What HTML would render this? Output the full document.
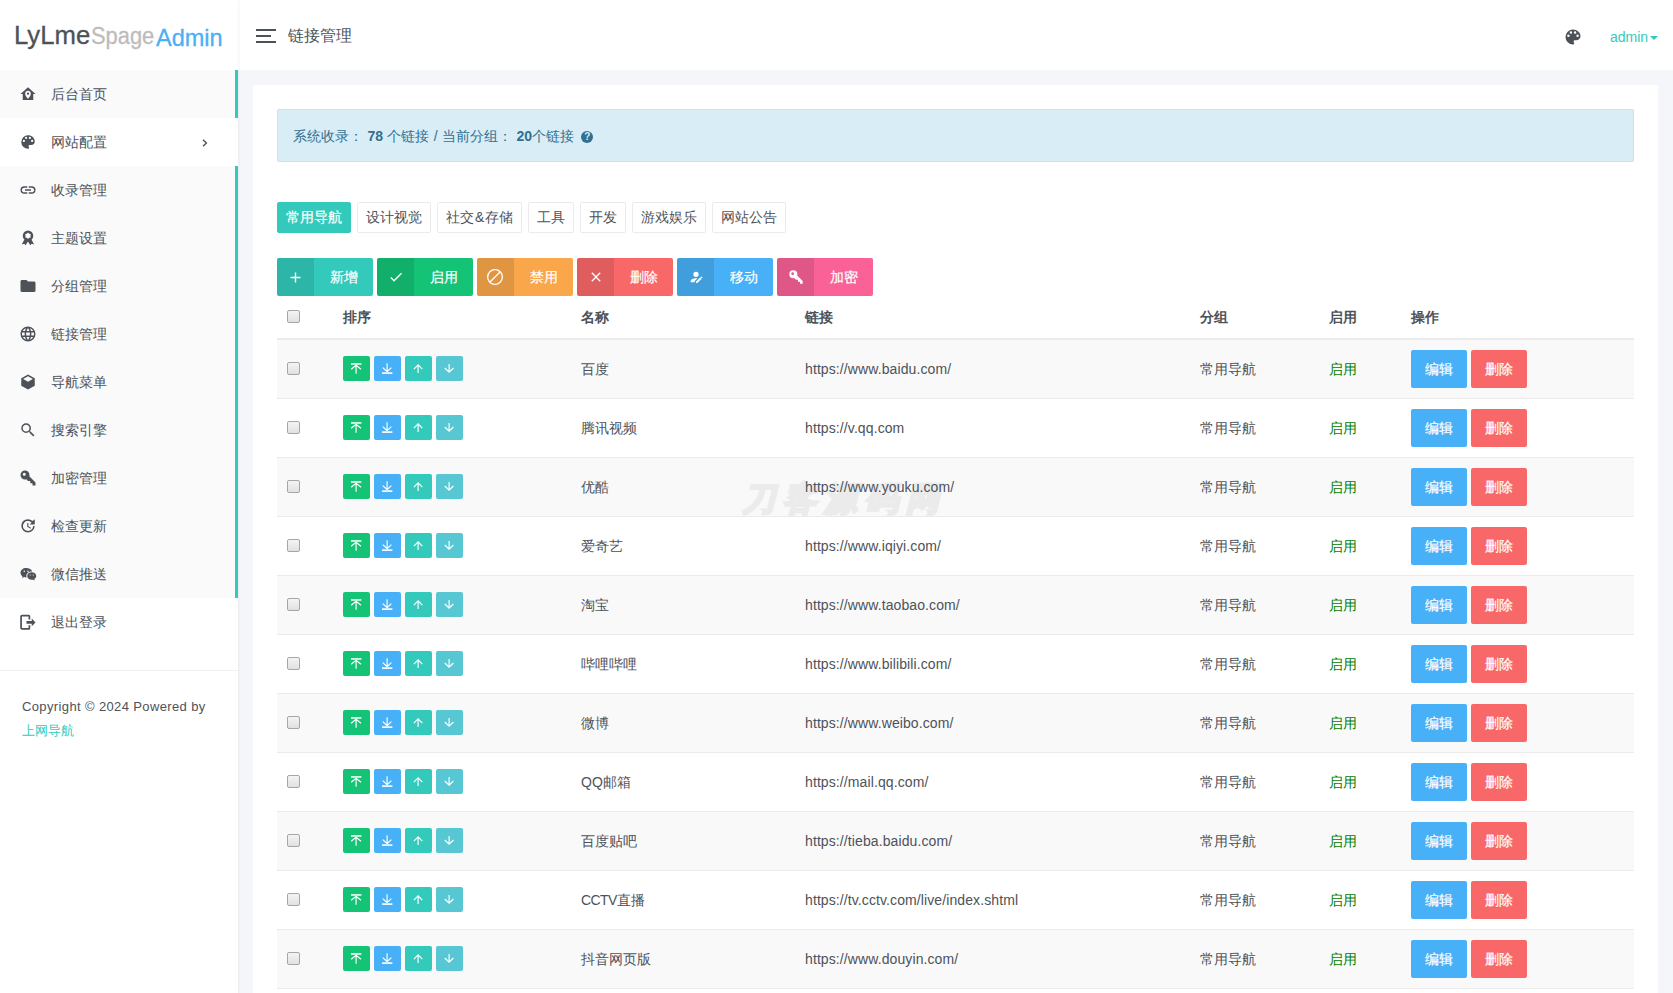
<!DOCTYPE html>
<html><head><meta charset="utf-8"><style>
*{margin:0;padding:0;box-sizing:border-box}
html,body{width:1673px;height:993px;overflow:hidden;background:#f5f6fa;font-family:"Liberation Sans",sans-serif;color:#4d5259;font-size:14px}
.sidebar{position:absolute;z-index:5;left:0;top:0;width:238px;height:993px;background:#fff;box-shadow:1px 0 2px rgba(0,0,0,.05)}
.lg{position:absolute;line-height:30px;transform-origin:0 0;white-space:nowrap;-webkit-text-stroke:0.3px currentColor}
.logo{position:absolute;left:0;top:0;width:238px;height:70px}
.header{position:absolute;left:238px;top:0;right:0;height:70px;background:#fff}
.mi{position:absolute;left:0;width:238px;height:48px;background:#fff}
.mi.act{background:#fafafa}
.mi .ico{position:absolute;left:19px;top:15px;width:18px;height:18px}
.mi .ico svg{display:block}
.mi .mt{position:absolute;left:51px;top:14px;line-height:20px;font-size:14px;color:#4d5259}
.mi .arr{position:absolute;left:202px;top:21px}
.bar{position:absolute;left:235px;width:3px;background:#33cabb}
.divider{position:absolute;left:0;top:670px;width:238px;height:1px;background:#f0f0f0}
.copy{position:absolute;left:22px;top:695px;line-height:24px;font-size:13px;letter-spacing:0.37px;color:#4d5259}
.copy a{letter-spacing:0}
.copy a{color:#33cabb;text-decoration:none}
.card{position:absolute;left:253px;top:85px;width:1405px;height:920px;background:#fff}
.alert{position:absolute;left:24px;top:24px;width:1357px;height:53px;background:#d9edf7;border:1px solid #bce8f1;border-radius:2px;color:#31708f;padding:0 15px;line-height:52px;font-size:14px;word-spacing:0.5px}
.tabs{position:absolute;left:24px;top:117px;height:31px;white-space:nowrap}
.tab{display:inline-block;vertical-align:top;height:31px;line-height:29px;padding:0 8px;border:1px solid #ebebeb;border-radius:2px;margin-right:6px;font-size:14px;color:#4d5259;background:#fff}
.tab.on{background:#33cabb;border-color:#33cabb;color:#fff;-webkit-text-stroke:0.2px #fff}
.tools{position:absolute;left:24px;top:173px;height:38px;white-space:nowrap}
.tb{position:relative;display:inline-block;vertical-align:top;width:96px;height:38px;margin-right:4px;border-radius:2px;color:#fff;font-size:14px;line-height:38px;overflow:hidden}
.tb .lb{position:absolute;left:0;top:0;width:37px;height:38px;background:rgba(0,0,0,.1)}
.tb .lb svg{position:absolute;left:11px;top:11px}
.tb .tx{position:absolute;left:52.5px;top:0;-webkit-text-stroke:0.2px #fff}
.table{position:absolute;left:24px;top:211px;width:1357px;height:800px}
.th{position:absolute;top:0;left:0;width:1357px;height:44px;border-bottom:2px solid #ebebeb}
.th span{position:absolute;top:11px;line-height:20px;font-weight:bold;font-size:14px;color:#4d5259}
.cb{position:absolute;top:21.5px;width:13px;height:13px;border:1px solid #a6a6a6;border-radius:2px;background:linear-gradient(#f4f4f4,#e1e1e1)}
.th .cb{top:14px}
.tr{position:absolute;left:0;width:1357px;height:59px;border-bottom:1px solid #ebebeb;background:#fff}
.tr.odd{background:#f9f9f9}
.tr .td{position:absolute;top:19px;line-height:20px;color:#4d5259}
.tr .url{letter-spacing:0.1px}
.tr .green{color:#008000}
.sbs{position:absolute;left:66px;top:16px;height:25px;white-space:nowrap}
.sb{display:inline-block;vertical-align:top;width:27px;height:25px;border-radius:2px;margin-right:4px;position:relative}
.sb svg{position:absolute;left:0;top:0}
.s-succ{background:#15c377}.s-info{background:#48b0f7}.s-prim{background:#33cabb}.s-cyan{background:#57c7d4}
.ob{position:absolute;top:10px;width:56px;height:38px;border-radius:2px;color:#fff;text-align:center;line-height:38px;-webkit-text-stroke:0.2px #fff}
.b-edit{background:#48b0f7}.b-del{background:#f96868}
.wm{position:absolute;z-index:1;left:742px;top:481px;font-size:33px;line-height:36px;font-weight:bold;font-style:italic;color:#ebebeb;-webkit-text-stroke:2.6px #ebebeb;letter-spacing:8px;white-space:nowrap}
.tr .td,.tr .sbs,.tr .ob,.tr .cb{z-index:2}
</style></head><body>
<div class="sidebar">
 <div class="logo">
  <span class="lg" style="left:14px;top:19.5px;font-size:26.5px;color:#4d5259;transform:scaleX(0.97)">LyLme</span>
  <span class="lg" style="left:91px;top:21px;font-size:23.5px;color:#bcbcbc;transform:scaleX(0.93)">Spage</span>
  <span class="lg" style="left:155.5px;top:22.5px;font-size:24.5px;color:#48b0f7;transform:scaleX(0.96)">Admin</span>
 </div>
<div class="mi act" style="top:70px"><span class="ico"><svg width="18" height="18" viewBox="0 0 24 24" fill="#4d5259" ><path fill-rule="evenodd" d="M12,3L2,12H5V20H19V12H22L12,3M12,7.7C14.1,7.7 15.8,9.4 15.8,11.5C15.8,14.5 12,18.3 12,18.3C12,18.3 8.2,14.5 8.2,11.5C8.2,9.4 9.9,7.7 12,7.7M12,10A1.5,1.5 0 0,0 10.5,11.5A1.5,1.5 0 0,0 12,13A1.5,1.5 0 0,0 13.5,11.5A1.5,1.5 0 0,0 12,10Z"/></svg></span><span class="mt">后台首页</span></div>
<div class="mi" style="top:118px"><span class="ico"><svg width="18" height="18" viewBox="0 0 24 24" fill="#4d5259" ><path d="M17.5,12A1.5,1.5 0 0,1 16,10.5A1.5,1.5 0 0,1 17.5,9A1.5,1.5 0 0,1 19,10.5A1.5,1.5 0 0,1 17.5,12M14.5,8A1.5,1.5 0 0,1 13,6.5A1.5,1.5 0 0,1 14.5,5A1.5,1.5 0 0,1 16,6.5A1.5,1.5 0 0,1 14.5,8M9.5,8A1.5,1.5 0 0,1 8,6.5A1.5,1.5 0 0,1 9.5,5A1.5,1.5 0 0,1 11,6.5A1.5,1.5 0 0,1 9.5,8M6.5,12A1.5,1.5 0 0,1 5,10.5A1.5,1.5 0 0,1 6.5,9A1.5,1.5 0 0,1 8,10.5A1.5,1.5 0 0,1 6.5,12M12,3A9,9 0 0,0 3,12A9,9 0 0,0 12,21A1.5,1.5 0 0,0 13.5,19.5C13.5,19.11 13.35,18.76 13.11,18.5C12.88,18.23 12.73,17.88 12.73,17.5A1.5,1.5 0 0,1 14.23,16H16A5,5 0 0,0 21,11C21,6.58 16.97,3 12,3Z"/></svg></span><span class="mt">网站配置</span><svg class="arr" width="6" height="8" viewBox="0 0 6 8"><path d="M1 0.8L4.4 4 1 7.2" fill="none" stroke="#4d5259" stroke-width="1.4"/></svg></div>
<div class="mi act" style="top:166px"><span class="ico"><svg width="18" height="18" viewBox="0 0 24 24" fill="#4d5259" ><path d="M3.9,12C3.9,10.29 5.29,8.9 7,8.9H11V7H7A5,5 0 0,0 2,12A5,5 0 0,0 7,17H11V15.1H7C5.29,15.1 3.9,13.71 3.9,12M8,13H16V11H8V13M17,7H13V8.9H17C18.71,8.9 20.1,10.29 20.1,12C20.1,13.71 18.71,15.1 17,15.1H13V17H17A5,5 0 0,0 22,12A5,5 0 0,0 17,7Z"/></svg></span><span class="mt">收录管理</span></div>
<div class="mi act" style="top:214px"><span class="ico"><svg width="18" height="18" viewBox="0 0 24 24" fill="#4d5259" ><path fill-rule="evenodd" d="M12 2a7 7 0 1 1 0 14a7 7 0 1 1 0-14zM12.00 4.60 L13.60 6.23 L15.81 6.80 L15.20 9.00 L15.81 11.20 L13.60 11.77 L12.00 13.40 L10.40 11.77 L8.19 11.20 L8.80 9.00 L8.19 6.80 L10.40 6.23Z"/><path d="M7.2 14L3.6 20.6 6.9 19.7 8.8 21.8 11.9 16.6 15 21.8 16.9 19.7 20.2 20.6 16.6 14z"/></svg></span><span class="mt">主题设置</span></div>
<div class="mi act" style="top:262px"><span class="ico"><svg width="18" height="18" viewBox="0 0 24 24" fill="#4d5259" ><path d="M10,4H4C2.89,4 2,4.89 2,6V18A2,2 0 0,0 4,20H20A2,2 0 0,0 22,18V8C22,6.89 21.1,6 20,6H12L10,4Z"/></svg></span><span class="mt">分组管理</span></div>
<div class="mi act" style="top:310px"><span class="ico"><svg width="18" height="18" viewBox="0 0 24 24" fill="#4d5259" ><path d="M16.36,14C16.44,13.34 16.5,12.68 16.5,12C16.5,11.32 16.44,10.66 16.36,10H19.74C19.9,10.64 20,11.31 20,12C20,12.69 19.9,13.36 19.74,14M14.59,19.56C15.19,18.45 15.65,17.25 15.97,16H18.92C17.96,17.65 16.43,18.93 14.59,19.56M14.34,14H9.66C9.56,13.34 9.5,12.68 9.5,12C9.5,11.32 9.56,10.65 9.66,10H14.34C14.43,10.65 14.5,11.32 14.5,12C14.5,12.68 14.43,13.34 14.34,14M12,19.96C11.17,18.76 10.5,17.43 10.09,16H13.910C13.5,17.43 12.83,18.76 12,19.96M8,8H5.08C6.03,6.34 7.570,5.06 9.4,4.44C8.8,5.55 8.35,6.75 8,8M5.08,16H8C8.35,17.25 8.8,18.45 9.4,19.56C7.57,18.93 6.03,17.65 5.08,16M4.26,14C4.1,13.36 4,12.69 4,12C4,11.31 4.1,10.64 4.26,10H7.64C7.56,10.66 7.5,11.32 7.5,12C7.5,12.68 7.56,13.34 7.64,14M12,4.03C12.83,5.23 13.5,6.57 13.91,8H10.09C10.5,6.57 11.17,5.23 12,4.03M18.92,8H15.97C15.65,6.75 15.19,5.55 14.59,4.44C16.43,5.07 17.96,6.34 18.92,8M12,2C6.47,2 2,6.5 2,12A10,10 0 0,0 12,22A10,10 0 0,0 22,12A10,10 0 0,0 12,2Z"/></svg></span><span class="mt">链接管理</span></div>
<div class="mi act" style="top:358px"><span class="ico"><svg width="18" height="18" viewBox="0 0 24 24" fill="#4d5259" ><path d="M12 2l9 5v10l-9 5-9-5V7z M12 4.3L5.5 7.9 12 11.5l6.5-3.6z" fill-rule="evenodd"/></svg></span><span class="mt">导航菜单</span></div>
<div class="mi act" style="top:406px"><span class="ico"><svg width="18" height="18" viewBox="0 0 24 24" fill="#4d5259" ><path d="M9.5,3A6.5,6.5 0 0,1 16,9.5C16,11.11 15.41,12.59 14.44,13.73L14.71,14H15.5L20.5,19L19,20.5L14,15.5V14.71L13.73,14.44C12.59,15.41 11.11,16 9.5,16A6.5,6.5 0 0,1 3,9.5A6.5,6.5 0 0,1 9.5,3M9.5,5C7,5 5,7 5,9.5C5,12 7,14 9.5,14C12,14 14,12 14,9.5C14,7 12,5 9.5,5Z"/></svg></span><span class="mt">搜索引擎</span></div>
<div class="mi act" style="top:454px"><span class="ico"><svg width="18" height="18" viewBox="0 0 24 24" fill="#4d5259" ><path d="M22,18V22H18V19H15V16H12L9.74,13.74C9.19,13.91 8.61,14 8,14A6,6 0 0,1 2,8A6,6 0 0,1 8,2A6,6 0 0,1 14,8C14,8.61 13.91,9.19 13.74,9.74L22,18M7,5A2,2 0 0,0 5,7A2,2 0 0,0 7,9A2,2 0 0,0 9,7A2,2 0 0,0 7,5Z"/></svg></span><span class="mt">加密管理</span></div>
<div class="mi act" style="top:502px"><span class="ico"><svg width="18" height="18" viewBox="0 0 24 24" fill="#4d5259" ><path d="M21 10.1h-6.8l2.7-2.8C14.2 4.6 9.9 4.5 7.2 7.2a6.8 6.8 0 0 0 0 9.6 6.8 6.8 0 0 0 9.6 0c1.3-1.3 2-2.9 2-4.8h2c0 2.4-1 4.4-2.6 6.1a9 9 0 0 1-12.6 0 9 9 0 0 1 0-12.6 8.9 8.9 0 0 1 12.5 0L21 3zM12.5 8v4.2l3.5 2.1-.7 1.2-4.3-2.5V8z"/></svg></span><span class="mt">检查更新</span></div>
<div class="mi act" style="top:550px"><span class="ico"><svg width="18" height="18" viewBox="0 0 24 24" fill="#4d5259" ><path d="M9.5 4C5.4 4 2 6.8 2 10.3c0 2 1.1 3.7 2.8 4.9L4.1 17.5l2.6-1.4c.9.3 1.8.4 2.8.4h.6a5.6 5.6 0 0 1-.3-1.8c0-3.4 3.2-6.1 7.2-6.1h.6C16.9 5.9 13.5 4 9.5 4zM7 7.3a1 1 0 1 1 0 2 1 1 0 0 1 0-2zm5 0a1 1 0 1 1 0 2 1 1 0 0 1 0-2zM17 9.8c-3.3 0-6 2.2-6 5s2.7 5 6 5c.7 0 1.4-.1 2-.3l2.1 1.1-.6-1.9c1.5-.9 2.5-2.3 2.5-3.9 0-2.8-2.7-5-6-5zm-2 2.7a.8.8 0 1 1 0 1.6.8.8 0 0 1 0-1.6zm4 0a.8.8 0 1 1 0 1.6.8.8 0 0 1 0-1.6z"/></svg></span><span class="mt">微信推送</span></div>
<div class="mi" style="top:598px"><span class="ico"><svg width="18" height="18" viewBox="0 0 24 24" fill="#4d5259" ><path d="M4 2.4h9a2 2 0 0 1 2 2V8.6h-2.3V4.7H3.9v15.3h8.8v-3.7H15v4a2 2 0 0 1-2 2H4a2.4 2.4 0 0 1-2.4-2.4V4.8A2.4 2.4 0 0 1 4 2.4zM10 10.6h7V7.2l5 5.3-5 5.3v-3.4H10z"/></svg></span><span class="mt">退出登录</span></div>

 <div class="bar" style="top:70px;height:48px"></div>
 <div class="bar" style="top:166px;height:432px"></div>
 <div class="divider"></div>
 <div class="copy">Copyright © 2024 Powered by<br><a>上网导航</a></div>
</div>
<div class="header">
 <svg style="position:absolute;left:18px;top:29px" width="20" height="14" viewBox="0 0 20 14"><rect x="0" y="0" width="20" height="2" fill="#4d5259"/><rect x="0" y="6" width="15" height="2" fill="#4d5259"/><rect x="0" y="12" width="20" height="2" fill="#4d5259"/></svg>
 <span style="position:absolute;left:50px;top:25px;font-size:16px;line-height:22px;color:#4d5259">链接管理</span>
 <svg width="20" height="20" viewBox="0 0 24 24" fill="#4d5259" style="position:absolute;left:1325px;top:27px"><path d="M17.5,12A1.5,1.5 0 0,1 16,10.5A1.5,1.5 0 0,1 17.5,9A1.5,1.5 0 0,1 19,10.5A1.5,1.5 0 0,1 17.5,12M14.5,8A1.5,1.5 0 0,1 13,6.5A1.5,1.5 0 0,1 14.5,5A1.5,1.5 0 0,1 16,6.5A1.5,1.5 0 0,1 14.5,8M9.5,8A1.5,1.5 0 0,1 8,6.5A1.5,1.5 0 0,1 9.5,5A1.5,1.5 0 0,1 11,6.5A1.5,1.5 0 0,1 9.5,8M6.5,12A1.5,1.5 0 0,1 5,10.5A1.5,1.5 0 0,1 6.5,9A1.5,1.5 0 0,1 8,10.5A1.5,1.5 0 0,1 6.5,12M12,3A9,9 0 0,0 3,12A9,9 0 0,0 12,21A1.5,1.5 0 0,0 13.5,19.5C13.5,19.11 13.35,18.76 13.11,18.5C12.88,18.23 12.73,17.88 12.73,17.5A1.5,1.5 0 0,1 14.23,16H16A5,5 0 0,0 21,11C21,6.58 16.97,3 12,3Z"/></svg>
 <span style="position:absolute;left:1372px;top:27px;font-size:14px;line-height:20px;color:#33cabb">admin</span>
 <span style="position:absolute;left:1412px;top:36px;width:0;height:0;border-left:4px solid transparent;border-right:4px solid transparent;border-top:4px solid #33cabb"></span>
</div>
<div class="card">
 <div class="alert">系统收录：&nbsp;<b>78</b> 个链接 / 当前分组：&nbsp;<b>20</b>个链接 <span style="display:inline-block;width:12px;height:12px;border-radius:6px;background:#31708f;color:#d9edf7;font-size:10px;line-height:12px;text-align:center;font-weight:bold;vertical-align:1px;margin-left:3px">?</span></div>
 <div class="tabs"><span class="tab on">常用导航</span><span class="tab">设计视觉</span><span class="tab">社交<span style="margin:0 1px">&amp;</span>存储</span><span class="tab">工具</span><span class="tab">开发</span><span class="tab">游戏娱乐</span><span class="tab">网站公告</span></div>
 <div class="tools">
  <span class="tb" style="background:#33cabb"><span class="lb"><svg width="17" height="17" viewBox="0 0 24 24" fill="#fff" style="left:10px;top:10.5px"><path d="M19,13H13V19H11V13H5V11H11V5H13V11H19V13Z"/></svg></span><span class="tx">新增</span></span><span class="tb" style="background:#15c377"><span class="lb"><svg width="16" height="16" viewBox="0 0 24 24" fill="#fff" style="left:10.5px;top:11px"><path d="M21,7L9,19L3.5,13.5L4.91,12.09L9,16.17L19.59,5.59L21,7Z"/></svg></span><span class="tx">启用</span></span><span class="tb" style="background:#faa64b"><span class="lb"><svg width="16" height="16" viewBox="0 0 24 24" fill="#fff" style="left:10px;top:11px"><path d="M12,0A12,12 0 0,1 24,12A12,12 0 0,1 12,24A12,12 0 0,1 0,12A12,12 0 0,1 12,0M12,2A10,10 0 0,0 2,12C2,14.4 2.85,16.6 4.26,18.33L18.33,4.26C16.6,2.85 14.4,2 12,2M12,22A10,10 0 0,0 22,12C22,9.6 21.15,7.4 19.74,5.67L5.67,19.74C7.4,21.15 9.6,22 12,22Z"/></svg></span><span class="tx">禁用</span></span><span class="tb" style="background:#f96868"><span class="lb"><svg width="16" height="16" viewBox="0 0 24 24" fill="#fff" style="left:10.5px;top:11px"><path d="M19,6.41L17.59,5L12,10.59L6.41,5L5,6.41L10.59,12L5,17.59L6.41,19L12,13.41L17.59,19L19,17.59L13.41,12L19,6.41Z"/></svg></span><span class="tx">删除</span></span><span class="tb" style="background:#48b0f7"><span class="lb"><svg width="16" height="16" viewBox="0 0 24 24" fill="#fff" style="left:10.5px;top:11px"><path d="M21.7,13.35L20.7,14.35L18.65,12.3L19.65,11.3C19.86,11.09 20.21,11.09 20.42,11.3L21.7,12.58C21.91,12.79 21.91,13.14 21.7,13.35M12,18.94L18.06,12.88L20.11,14.93L14.06,21H12V18.94M12,14C7.58,14 4,15.79 4,18V20H10V18.11L14,14.11C13.34,14.03 12.67,14 12,14M12,4A4,4 0 0,0 8,8A4,4 0 0,0 12,12A4,4 0 0,0 16,8A4,4 0 0,0 12,4Z"/></svg></span><span class="tx">移动</span></span><span class="tb" style="background:#f96197"><span class="lb"><svg width="16" height="16" viewBox="0 0 24 24" fill="#fff" style="left:10.5px;top:11px"><path d="M22,18V22H18V19H15V16H12L9.74,13.74C9.19,13.91 8.61,14 8,14A6,6 0 0,1 2,8A6,6 0 0,1 8,2A6,6 0 0,1 14,8C14,8.61 13.91,9.19 13.74,9.74L22,18M7,5A2,2 0 0,0 5,7A2,2 0 0,0 7,9A2,2 0 0,0 9,7A2,2 0 0,0 7,5Z"/></svg></span><span class="tx">加密</span></span>
 </div>
 <div class="table">
  <div class="th"><span class="cb" style="left:10px"></span><span style="left:66px">排序</span><span style="left:304px">名称</span><span style="left:528px">链接</span><span style="left:923px">分组</span><span style="left:1052px">启用</span><span style="left:1134px">操作</span></div>
<div class="tr odd" style="top:44px">
<span class="cb" style="left:10px"></span>
<span class="sbs"><span class="sb s-succ"><svg width="27" height="25" viewBox="0 0 27 25" fill="#fff"><rect x="8" y="7.2" width="10.4" height="1.5"/><path d="M8.2 13.3L13.1 9.2 18 13.3M13.1 9.4V17.8" fill="none" stroke="#fff" stroke-width="1.15"/></svg></span><span class="sb s-info"><svg width="27" height="25" viewBox="0 0 27 25" fill="#fff"><rect x="8" y="16.3" width="10.4" height="1.6"/><path d="M8.8 11.6L13.1 15.7 17.4 11.6M13.1 7.2V15.5" fill="none" stroke="#fff" stroke-width="1.15"/></svg></span><span class="sb s-prim"><svg width="27" height="25" viewBox="0 0 27 25" fill="#fff"><path d="M8.9 13.2L13.1 8.9 17.3 13.2M13.1 9.1V17" fill="none" stroke="#fff" stroke-width="1.15"/></svg></span><span class="sb s-cyan"><svg width="27" height="25" viewBox="0 0 27 25" fill="#fff"><path d="M8.8 12L13.1 16.2 17.4 12M13.1 8V16" fill="none" stroke="#fff" stroke-width="1.15"/></svg></span></span>
<span class="td" style="left:304px">百度</span>
<span class="td url" style="left:528px">https://www.baidu.com/</span>
<span class="td" style="left:923px">常用导航</span>
<span class="td green" style="left:1052px">启用</span>
<span class="ob b-edit" style="left:1134px">编辑</span><span class="ob b-del" style="left:1194px">删除</span>
</div>
<div class="tr" style="top:103px">
<span class="cb" style="left:10px"></span>
<span class="sbs"><span class="sb s-succ"><svg width="27" height="25" viewBox="0 0 27 25" fill="#fff"><rect x="8" y="7.2" width="10.4" height="1.5"/><path d="M8.2 13.3L13.1 9.2 18 13.3M13.1 9.4V17.8" fill="none" stroke="#fff" stroke-width="1.15"/></svg></span><span class="sb s-info"><svg width="27" height="25" viewBox="0 0 27 25" fill="#fff"><rect x="8" y="16.3" width="10.4" height="1.6"/><path d="M8.8 11.6L13.1 15.7 17.4 11.6M13.1 7.2V15.5" fill="none" stroke="#fff" stroke-width="1.15"/></svg></span><span class="sb s-prim"><svg width="27" height="25" viewBox="0 0 27 25" fill="#fff"><path d="M8.9 13.2L13.1 8.9 17.3 13.2M13.1 9.1V17" fill="none" stroke="#fff" stroke-width="1.15"/></svg></span><span class="sb s-cyan"><svg width="27" height="25" viewBox="0 0 27 25" fill="#fff"><path d="M8.8 12L13.1 16.2 17.4 12M13.1 8V16" fill="none" stroke="#fff" stroke-width="1.15"/></svg></span></span>
<span class="td" style="left:304px">腾讯视频</span>
<span class="td url" style="left:528px">https://v.qq.com</span>
<span class="td" style="left:923px">常用导航</span>
<span class="td green" style="left:1052px">启用</span>
<span class="ob b-edit" style="left:1134px">编辑</span><span class="ob b-del" style="left:1194px">删除</span>
</div>
<div class="tr odd" style="top:162px">
<span class="cb" style="left:10px"></span>
<span class="sbs"><span class="sb s-succ"><svg width="27" height="25" viewBox="0 0 27 25" fill="#fff"><rect x="8" y="7.2" width="10.4" height="1.5"/><path d="M8.2 13.3L13.1 9.2 18 13.3M13.1 9.4V17.8" fill="none" stroke="#fff" stroke-width="1.15"/></svg></span><span class="sb s-info"><svg width="27" height="25" viewBox="0 0 27 25" fill="#fff"><rect x="8" y="16.3" width="10.4" height="1.6"/><path d="M8.8 11.6L13.1 15.7 17.4 11.6M13.1 7.2V15.5" fill="none" stroke="#fff" stroke-width="1.15"/></svg></span><span class="sb s-prim"><svg width="27" height="25" viewBox="0 0 27 25" fill="#fff"><path d="M8.9 13.2L13.1 8.9 17.3 13.2M13.1 9.1V17" fill="none" stroke="#fff" stroke-width="1.15"/></svg></span><span class="sb s-cyan"><svg width="27" height="25" viewBox="0 0 27 25" fill="#fff"><path d="M8.8 12L13.1 16.2 17.4 12M13.1 8V16" fill="none" stroke="#fff" stroke-width="1.15"/></svg></span></span>
<span class="td" style="left:304px">优酷</span>
<span class="td url" style="left:528px">https://www.youku.com/</span>
<span class="td" style="left:923px">常用导航</span>
<span class="td green" style="left:1052px">启用</span>
<span class="ob b-edit" style="left:1134px">编辑</span><span class="ob b-del" style="left:1194px">删除</span>
</div>
<div class="tr" style="top:221px">
<span class="cb" style="left:10px"></span>
<span class="sbs"><span class="sb s-succ"><svg width="27" height="25" viewBox="0 0 27 25" fill="#fff"><rect x="8" y="7.2" width="10.4" height="1.5"/><path d="M8.2 13.3L13.1 9.2 18 13.3M13.1 9.4V17.8" fill="none" stroke="#fff" stroke-width="1.15"/></svg></span><span class="sb s-info"><svg width="27" height="25" viewBox="0 0 27 25" fill="#fff"><rect x="8" y="16.3" width="10.4" height="1.6"/><path d="M8.8 11.6L13.1 15.7 17.4 11.6M13.1 7.2V15.5" fill="none" stroke="#fff" stroke-width="1.15"/></svg></span><span class="sb s-prim"><svg width="27" height="25" viewBox="0 0 27 25" fill="#fff"><path d="M8.9 13.2L13.1 8.9 17.3 13.2M13.1 9.1V17" fill="none" stroke="#fff" stroke-width="1.15"/></svg></span><span class="sb s-cyan"><svg width="27" height="25" viewBox="0 0 27 25" fill="#fff"><path d="M8.8 12L13.1 16.2 17.4 12M13.1 8V16" fill="none" stroke="#fff" stroke-width="1.15"/></svg></span></span>
<span class="td" style="left:304px">爱奇艺</span>
<span class="td url" style="left:528px">https://www.iqiyi.com/</span>
<span class="td" style="left:923px">常用导航</span>
<span class="td green" style="left:1052px">启用</span>
<span class="ob b-edit" style="left:1134px">编辑</span><span class="ob b-del" style="left:1194px">删除</span>
</div>
<div class="tr odd" style="top:280px">
<span class="cb" style="left:10px"></span>
<span class="sbs"><span class="sb s-succ"><svg width="27" height="25" viewBox="0 0 27 25" fill="#fff"><rect x="8" y="7.2" width="10.4" height="1.5"/><path d="M8.2 13.3L13.1 9.2 18 13.3M13.1 9.4V17.8" fill="none" stroke="#fff" stroke-width="1.15"/></svg></span><span class="sb s-info"><svg width="27" height="25" viewBox="0 0 27 25" fill="#fff"><rect x="8" y="16.3" width="10.4" height="1.6"/><path d="M8.8 11.6L13.1 15.7 17.4 11.6M13.1 7.2V15.5" fill="none" stroke="#fff" stroke-width="1.15"/></svg></span><span class="sb s-prim"><svg width="27" height="25" viewBox="0 0 27 25" fill="#fff"><path d="M8.9 13.2L13.1 8.9 17.3 13.2M13.1 9.1V17" fill="none" stroke="#fff" stroke-width="1.15"/></svg></span><span class="sb s-cyan"><svg width="27" height="25" viewBox="0 0 27 25" fill="#fff"><path d="M8.8 12L13.1 16.2 17.4 12M13.1 8V16" fill="none" stroke="#fff" stroke-width="1.15"/></svg></span></span>
<span class="td" style="left:304px">淘宝</span>
<span class="td url" style="left:528px">https://www.taobao.com/</span>
<span class="td" style="left:923px">常用导航</span>
<span class="td green" style="left:1052px">启用</span>
<span class="ob b-edit" style="left:1134px">编辑</span><span class="ob b-del" style="left:1194px">删除</span>
</div>
<div class="tr" style="top:339px">
<span class="cb" style="left:10px"></span>
<span class="sbs"><span class="sb s-succ"><svg width="27" height="25" viewBox="0 0 27 25" fill="#fff"><rect x="8" y="7.2" width="10.4" height="1.5"/><path d="M8.2 13.3L13.1 9.2 18 13.3M13.1 9.4V17.8" fill="none" stroke="#fff" stroke-width="1.15"/></svg></span><span class="sb s-info"><svg width="27" height="25" viewBox="0 0 27 25" fill="#fff"><rect x="8" y="16.3" width="10.4" height="1.6"/><path d="M8.8 11.6L13.1 15.7 17.4 11.6M13.1 7.2V15.5" fill="none" stroke="#fff" stroke-width="1.15"/></svg></span><span class="sb s-prim"><svg width="27" height="25" viewBox="0 0 27 25" fill="#fff"><path d="M8.9 13.2L13.1 8.9 17.3 13.2M13.1 9.1V17" fill="none" stroke="#fff" stroke-width="1.15"/></svg></span><span class="sb s-cyan"><svg width="27" height="25" viewBox="0 0 27 25" fill="#fff"><path d="M8.8 12L13.1 16.2 17.4 12M13.1 8V16" fill="none" stroke="#fff" stroke-width="1.15"/></svg></span></span>
<span class="td" style="left:304px">哔哩哔哩</span>
<span class="td url" style="left:528px">https://www.bilibili.com/</span>
<span class="td" style="left:923px">常用导航</span>
<span class="td green" style="left:1052px">启用</span>
<span class="ob b-edit" style="left:1134px">编辑</span><span class="ob b-del" style="left:1194px">删除</span>
</div>
<div class="tr odd" style="top:398px">
<span class="cb" style="left:10px"></span>
<span class="sbs"><span class="sb s-succ"><svg width="27" height="25" viewBox="0 0 27 25" fill="#fff"><rect x="8" y="7.2" width="10.4" height="1.5"/><path d="M8.2 13.3L13.1 9.2 18 13.3M13.1 9.4V17.8" fill="none" stroke="#fff" stroke-width="1.15"/></svg></span><span class="sb s-info"><svg width="27" height="25" viewBox="0 0 27 25" fill="#fff"><rect x="8" y="16.3" width="10.4" height="1.6"/><path d="M8.8 11.6L13.1 15.7 17.4 11.6M13.1 7.2V15.5" fill="none" stroke="#fff" stroke-width="1.15"/></svg></span><span class="sb s-prim"><svg width="27" height="25" viewBox="0 0 27 25" fill="#fff"><path d="M8.9 13.2L13.1 8.9 17.3 13.2M13.1 9.1V17" fill="none" stroke="#fff" stroke-width="1.15"/></svg></span><span class="sb s-cyan"><svg width="27" height="25" viewBox="0 0 27 25" fill="#fff"><path d="M8.8 12L13.1 16.2 17.4 12M13.1 8V16" fill="none" stroke="#fff" stroke-width="1.15"/></svg></span></span>
<span class="td" style="left:304px">微博</span>
<span class="td url" style="left:528px">https://www.weibo.com/</span>
<span class="td" style="left:923px">常用导航</span>
<span class="td green" style="left:1052px">启用</span>
<span class="ob b-edit" style="left:1134px">编辑</span><span class="ob b-del" style="left:1194px">删除</span>
</div>
<div class="tr" style="top:457px">
<span class="cb" style="left:10px"></span>
<span class="sbs"><span class="sb s-succ"><svg width="27" height="25" viewBox="0 0 27 25" fill="#fff"><rect x="8" y="7.2" width="10.4" height="1.5"/><path d="M8.2 13.3L13.1 9.2 18 13.3M13.1 9.4V17.8" fill="none" stroke="#fff" stroke-width="1.15"/></svg></span><span class="sb s-info"><svg width="27" height="25" viewBox="0 0 27 25" fill="#fff"><rect x="8" y="16.3" width="10.4" height="1.6"/><path d="M8.8 11.6L13.1 15.7 17.4 11.6M13.1 7.2V15.5" fill="none" stroke="#fff" stroke-width="1.15"/></svg></span><span class="sb s-prim"><svg width="27" height="25" viewBox="0 0 27 25" fill="#fff"><path d="M8.9 13.2L13.1 8.9 17.3 13.2M13.1 9.1V17" fill="none" stroke="#fff" stroke-width="1.15"/></svg></span><span class="sb s-cyan"><svg width="27" height="25" viewBox="0 0 27 25" fill="#fff"><path d="M8.8 12L13.1 16.2 17.4 12M13.1 8V16" fill="none" stroke="#fff" stroke-width="1.15"/></svg></span></span>
<span class="td" style="left:304px">QQ邮箱</span>
<span class="td url" style="left:528px">https://mail.qq.com/</span>
<span class="td" style="left:923px">常用导航</span>
<span class="td green" style="left:1052px">启用</span>
<span class="ob b-edit" style="left:1134px">编辑</span><span class="ob b-del" style="left:1194px">删除</span>
</div>
<div class="tr odd" style="top:516px">
<span class="cb" style="left:10px"></span>
<span class="sbs"><span class="sb s-succ"><svg width="27" height="25" viewBox="0 0 27 25" fill="#fff"><rect x="8" y="7.2" width="10.4" height="1.5"/><path d="M8.2 13.3L13.1 9.2 18 13.3M13.1 9.4V17.8" fill="none" stroke="#fff" stroke-width="1.15"/></svg></span><span class="sb s-info"><svg width="27" height="25" viewBox="0 0 27 25" fill="#fff"><rect x="8" y="16.3" width="10.4" height="1.6"/><path d="M8.8 11.6L13.1 15.7 17.4 11.6M13.1 7.2V15.5" fill="none" stroke="#fff" stroke-width="1.15"/></svg></span><span class="sb s-prim"><svg width="27" height="25" viewBox="0 0 27 25" fill="#fff"><path d="M8.9 13.2L13.1 8.9 17.3 13.2M13.1 9.1V17" fill="none" stroke="#fff" stroke-width="1.15"/></svg></span><span class="sb s-cyan"><svg width="27" height="25" viewBox="0 0 27 25" fill="#fff"><path d="M8.8 12L13.1 16.2 17.4 12M13.1 8V16" fill="none" stroke="#fff" stroke-width="1.15"/></svg></span></span>
<span class="td" style="left:304px">百度贴吧</span>
<span class="td url" style="left:528px">https://tieba.baidu.com/</span>
<span class="td" style="left:923px">常用导航</span>
<span class="td green" style="left:1052px">启用</span>
<span class="ob b-edit" style="left:1134px">编辑</span><span class="ob b-del" style="left:1194px">删除</span>
</div>
<div class="tr" style="top:575px">
<span class="cb" style="left:10px"></span>
<span class="sbs"><span class="sb s-succ"><svg width="27" height="25" viewBox="0 0 27 25" fill="#fff"><rect x="8" y="7.2" width="10.4" height="1.5"/><path d="M8.2 13.3L13.1 9.2 18 13.3M13.1 9.4V17.8" fill="none" stroke="#fff" stroke-width="1.15"/></svg></span><span class="sb s-info"><svg width="27" height="25" viewBox="0 0 27 25" fill="#fff"><rect x="8" y="16.3" width="10.4" height="1.6"/><path d="M8.8 11.6L13.1 15.7 17.4 11.6M13.1 7.2V15.5" fill="none" stroke="#fff" stroke-width="1.15"/></svg></span><span class="sb s-prim"><svg width="27" height="25" viewBox="0 0 27 25" fill="#fff"><path d="M8.9 13.2L13.1 8.9 17.3 13.2M13.1 9.1V17" fill="none" stroke="#fff" stroke-width="1.15"/></svg></span><span class="sb s-cyan"><svg width="27" height="25" viewBox="0 0 27 25" fill="#fff"><path d="M8.8 12L13.1 16.2 17.4 12M13.1 8V16" fill="none" stroke="#fff" stroke-width="1.15"/></svg></span></span>
<span class="td" style="left:304px"><span style="letter-spacing:-0.6px">CCTV</span>直播</span>
<span class="td url" style="left:528px">https://tv.cctv.com/live/index.shtml</span>
<span class="td" style="left:923px">常用导航</span>
<span class="td green" style="left:1052px">启用</span>
<span class="ob b-edit" style="left:1134px">编辑</span><span class="ob b-del" style="left:1194px">删除</span>
</div>
<div class="tr odd" style="top:634px">
<span class="cb" style="left:10px"></span>
<span class="sbs"><span class="sb s-succ"><svg width="27" height="25" viewBox="0 0 27 25" fill="#fff"><rect x="8" y="7.2" width="10.4" height="1.5"/><path d="M8.2 13.3L13.1 9.2 18 13.3M13.1 9.4V17.8" fill="none" stroke="#fff" stroke-width="1.15"/></svg></span><span class="sb s-info"><svg width="27" height="25" viewBox="0 0 27 25" fill="#fff"><rect x="8" y="16.3" width="10.4" height="1.6"/><path d="M8.8 11.6L13.1 15.7 17.4 11.6M13.1 7.2V15.5" fill="none" stroke="#fff" stroke-width="1.15"/></svg></span><span class="sb s-prim"><svg width="27" height="25" viewBox="0 0 27 25" fill="#fff"><path d="M8.9 13.2L13.1 8.9 17.3 13.2M13.1 9.1V17" fill="none" stroke="#fff" stroke-width="1.15"/></svg></span><span class="sb s-cyan"><svg width="27" height="25" viewBox="0 0 27 25" fill="#fff"><path d="M8.8 12L13.1 16.2 17.4 12M13.1 8V16" fill="none" stroke="#fff" stroke-width="1.15"/></svg></span></span>
<span class="td" style="left:304px">抖音网页版</span>
<span class="td url" style="left:528px">https://www.douyin.com/</span>
<span class="td" style="left:923px">常用导航</span>
<span class="td green" style="left:1052px">启用</span>
<span class="ob b-edit" style="left:1134px">编辑</span><span class="ob b-del" style="left:1194px">删除</span>
</div>

 </div>
</div>
<div class="wm">刀客源码网</div>
</body></html>
